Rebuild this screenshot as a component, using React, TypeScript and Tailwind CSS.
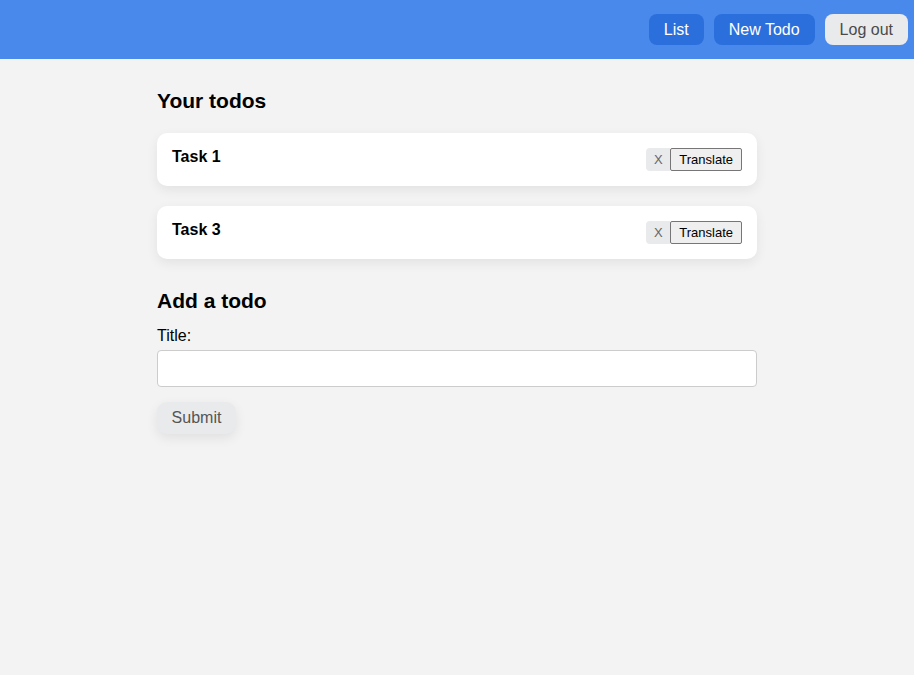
import React from "react";

const todos = [
    { id: 1, title: "Task 1" },
    { id: 3, title: "Task 3" },
];

export default function App() {
    const [title, setTitle] = React.useState("");

    return (
        <div className="min-h-[675px] bg-[#f3f3f3] text-black font-['Liberation_Sans',Arial,sans-serif]">
            {/* Top bar */}
            <nav className="flex h-[59px] items-center justify-end gap-[10px] bg-[#4a89ec] pr-[6px]">
                <button className="h-[31px] rounded-[8px] bg-[#2a6fdc] px-[15px] text-[16px] text-white">
                    List
                </button>
                <button className="h-[31px] rounded-[8px] bg-[#2a6fdc] px-[15px] text-[16px] text-white">
                    New Todo
                </button>
                <button className="h-[31px] rounded-[8px] bg-[#e9eaec] px-[15px] text-[16px] text-[#4a4a4a]">
                    Log out
                </button>
            </nav>

            <main className="mx-auto w-[600px] pt-[30px]">
                <h2 className="text-[21px] font-bold leading-[24px]">Your todos</h2>

                <ul className="mt-[20px] flex flex-col gap-[20px]">
                    {todos.map((todo) => (
                        <li
                            key={todo.id}
                            className="flex items-start justify-between rounded-[10px] bg-white p-[15px] shadow-[0_4px_12px_rgba(0,0,0,0.07)]"
                        >
                            <span className="text-[16px] font-bold leading-[18px]">{todo.title}</span>
                            <div className="flex">
                                <button className="h-[23px] w-[24px] rounded-l-[4px] bg-[#e9eaec] text-[13px] text-[#666]">
                                    X
                                </button>
                                <button className="h-[23px] rounded-[2px] border border-[#767676] bg-[#efefef] px-[8px] text-[13px] text-black">
                                    Translate
                                </button>
                            </div>
                        </li>
                    ))}
                </ul>

                <h2 className="mt-[30px] text-[21px] font-bold leading-[24px]">Add a todo</h2>

                <form className="mt-[14px] flex flex-col" onSubmit={(e) => e.preventDefault()}>
                    <label className="text-[16px] leading-[18px]">Title:</label>
                    <input
                        value={title}
                        onChange={(e) => setTitle(e.target.value)}
                        className="mt-[5px] h-[37px] w-full rounded-[4px] border border-[#cccccc] bg-white px-[8px] text-[16px] outline-none"
                    />
                    <div className="mt-[15px]">
                        <button
                            type="submit"
                            className="h-[32px] w-[79px] rounded-[10px] bg-[#e9eaec] text-[16px] text-[#555] shadow-[0_4px_12px_rgba(0,0,0,0.08)]"
                        >
                            Submit
                        </button>
                    </div>
                </form>
            </main>
        </div>
    );
}
